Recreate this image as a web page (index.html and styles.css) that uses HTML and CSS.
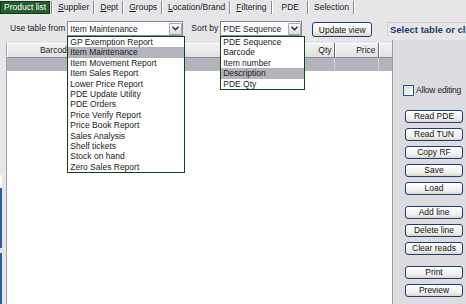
FILE: index.html
```html
<!DOCTYPE html>
<html lang="en">

<head>
    <meta charset="UTF-8">
    <meta name="viewport" content="width=device-width, initial-scale=1.0">
    <title>PDE</title>
    <link rel="stylesheet" href="styles.css">
</head>

<body>
    <div class="window">
        <!-- tabs -->
        <div class="tabs">
            <span class="tab"><span class="focus">Product list</span></span>
            <span class="tab"><u>S</u>upplier</span>
            <span class="tab"><u>D</u>ept</span>
            <span class="tab"><u>G</u>roups</span>
            <span class="tab"><u>L</u>ocation/Brand</span>
            <span class="tab"><u>F</u>iltering</span>
            <span class="tab current">PDE</span>
            <span class="tab">Selection</span>
        </div>

        <div class="page">
            <div class="toolbar">
                <label class="lbl">Use table from</label>
                <div class="combo table-combo">
                    <span class="value">Item Maintenance</span>
                    <span class="drop"><svg width="7" height="5" viewBox="0 0 7 5"><path d="M0.5 0.8 L3.5 3.8 L6.5 0.8" fill="none" stroke="#2b2b2b" stroke-width="1.4"/></svg></span>
                    <ul class="list">
                        <li>GP Exemption Report</li>
                        <li class="sel">Item Maintenance</li>
                        <li>Item Movement Report</li>
                        <li>Item Sales Report</li>
                        <li>Lower Price Report</li>
                        <li>PDE Update Utility</li>
                        <li>PDE Orders</li>
                        <li>Price Verify Report</li>
                        <li>Price Book Report</li>
                        <li>Sales Analysis</li>
                        <li>Shelf tickets</li>
                        <li>Stock on hand</li>
                        <li>Zero Sales Report</li>
                    </ul>
                </div>

                <label class="lbl sort-lbl">Sort by</label>
                <div class="combo sort-combo">
                    <span class="value">PDE Sequence</span>
                    <span class="drop"><svg width="7" height="5" viewBox="0 0 7 5"><path d="M0.5 0.8 L3.5 3.8 L6.5 0.8" fill="none" stroke="#2b2b2b" stroke-width="1.4"/></svg></span>
                    <ul class="list">
                        <li>PDE Sequence</li>
                        <li>Barcode</li>
                        <li>Item number</li>
                        <li class="sel">Description</li>
                        <li>PDE Qty</li>
                    </ul>
                </div>

                <button class="xp update">Update view</button>
            </div>

            <div class="title">Select table or click Update view</div>

            <div class="grid">
                <table>
                    <colgroup>
                        <col style="width: 98px">
                        <col style="width: 186px">
                        <col style="width: 43px">
                        <col style="width: 44px">
                        <col style="width: 14px">
                    </colgroup>
                    <thead>
                        <tr>
                            <th class="center">Barcode</th>
                            <th></th>
                            <th>Qty</th>
                            <th>Price</th>
                            <th></th>
                        </tr>
                    </thead>
                    <tbody>
                        <tr class="current-row">
                            <td></td>
                            <td></td>
                            <td></td>
                            <td></td>
                            <td></td>
                        </tr>
                    </tbody>
                </table>
            </div>

            <div class="side">
                <label class="check"><span class="box"></span>Allow editing</label>

                <div class="buttons">
                    <div class="group">
                        <button class="xp">Read PDE</button>
                        <button class="xp">Read TUN</button>
                        <button class="xp">Copy RF</button>
                        <button class="xp">Save</button>
                        <button class="xp">Load</button>
                    </div>
                    <div class="group">
                        <button class="xp">Add line</button>
                        <button class="xp">Delete line</button>
                        <button class="xp">Clear reads</button>
                    </div>
                    <div class="group last">
                        <button class="xp">Print</button>
                        <button class="xp">Preview</button>
                    </div>
                </div>
            </div>
        </div>

        <!-- edge of the window behind -->
        <div class="edge edge-white"></div>
        <div class="edge edge-blue"></div>
        <div class="edge edge-blue2"></div>
    </div>
</body>

</html>
```

FILE: styles.css
```css
/* general */
body {
    margin: 0;
    font-family: "Liberation Sans", Arial, sans-serif;
    font-size: 8.5px;
    color: #1c1c1c;
    background-color: #e6e6e9;
}

.window {
    position: relative;
    width: 466px;
    height: 304px;
    overflow: hidden;
}

/* tabs */
.tabs {
    display: flex;
    height: 16px;
    align-items: flex-start;
}

.tab {
    height: 13px;
    line-height: 12px;
    padding: 0 4px;
    margin-right: 2px;
    border-right: 1px solid #8a8a8e;
    box-shadow: 1px 0 0 #ffffff;
    white-space: nowrap;
    margin-top: 1px;
}

.tab:first-child {
    padding: 0 1px 0 0;
}

.tab.current {
    padding: 0 8px 0 8px;
}

.focus {
    display: inline-block;
    background-color: #23602a;
    color: #fff;
    padding: 0 3px;
    height: 11px;
    line-height: 11px;
    border: 1px solid #0f3a14;
    margin-top: -1px;
}

/* page layout */
.page {
    display: grid;
    grid-template-columns: 387px 5px 74px;
    grid-template-rows: 24px 1fr;
    grid-template-areas:
        "tools title title"
        "table table side";
    height: 288px;
}

/* toolbar */
.toolbar {
    grid-area: tools;
    display: flex;
    align-items: flex-start;
    padding: 5px 0 0 10px;
}

.lbl {
    line-height: 15px;
    white-space: nowrap;
}

.sort-lbl {
    margin-left: 8px;
}

.combo {
    position: relative;
    display: flex;
    align-items: center;
    height: 15px;
    box-sizing: border-box;
    background-color: #fff;
    border: 1px solid #7f8a99;
    margin-left: 2px;
}

.table-combo {
    width: 116px;
}

.sort-combo {
    width: 82px;
}

.value {
    flex: 1;
    padding-left: 2px;
    white-space: nowrap;
    overflow: hidden;
}

.drop {
    display: flex;
    align-items: center;
    justify-content: center;
    width: 13px;
    height: 12px;
    box-sizing: border-box;
    border: 1px solid #a9a9b2;
    border-radius: 1px;
    background: linear-gradient(#fbfbfb, #dcdce2);
}

/* open drop-down lists */
.list {
    position: absolute;
    left: -1px;
    top: 14px;
    margin: 0;
    padding: 0;
    list-style: none;
    background-color: #fff;
    border: 1px solid #12421a;
    z-index: 2;
}

.table-combo .list {
    width: 116px;
}

.sort-combo .list {
    width: 83px;
}

.list li {
    height: 10.4px;
    line-height: 10.4px;
    padding-left: 2px;
    white-space: nowrap;
    color: #222;
}

.list li.sel {
    background-color: #b4b4bc;
}

/* xp buttons */
.xp {
    font-family: "Liberation Sans", Arial, sans-serif;
    font-size: 8.5px;
    color: #111;
    padding: 0;
    border: 1px solid #1f3f6f;
    border-radius: 3px;
    background: linear-gradient(#ffffff, #f1f0ec 70%, #d9d5cc);
    box-sizing: border-box;
    cursor: pointer;
}

.update {
    width: 60px;
    height: 15px;
    margin-left: 10px;
    margin-top: 1px;
}

/* title */
.title {
    grid-area: title;
    margin-top: 6px;
    height: 14px;
    box-sizing: border-box;
    border-top: 1px solid #cfcfd4;
    border-left: 1px solid #cfcfd4;
    padding-left: 2px;
    font-size: 9.5px;
    font-weight: bold;
    line-height: 13px;
    color: #1e3a72;
    white-space: nowrap;
    overflow: hidden;
}

/* grid */
.grid {
    grid-area: table;
    margin: 3px 0 0 6px;
    background-color: #fff;
    border-left: 1px solid #a5a5aa;
    overflow: hidden;
}

table {
    border-collapse: collapse;
    table-layout: fixed;
    width: 385px;
}

th {
    height: 14px;
    padding: 0 2px 0 0;
    font-weight: normal;
    text-align: right;
    background: linear-gradient(#f2f2f3, #e1e1e4);
    border-right: 1px solid #6e6e72;
    border-bottom: 1px solid #8c8c90;
    box-shadow: inset 1px 1px 0 #ffffff;
    white-space: nowrap;
    overflow: hidden;
}

th.center {
    text-align: center;
    padding: 0;
}

td {
    height: 13px;
    padding: 0;
    background-color: #b3b3bb;
    border-right: 1px solid #d4d4d8;
}

/* right side */
.side {
    grid-area: side;
    min-width: 0;
    background-color: #dcdce0;
    border-left: 1px solid #9c9ca2;
    padding: 44px 0 0 10px;
}

.check {
    display: flex;
    align-items: center;
    gap: 2px;
    height: 12px;
    white-space: nowrap;
    letter-spacing: -0.2px;
}

.box {
    flex: none;
    width: 11px;
    height: 11px;
    box-sizing: border-box;
    border: 1px solid #2a5a8a;
    background: linear-gradient(135deg, #dcdcd6, #ffffff);
}

.buttons {
    margin: 14px 0 0 2px;
}

.group {
    display: flex;
    flex-direction: column;
    gap: 5px;
    margin-bottom: 11px;
}

.group .xp {
    width: 58px;
    height: 13px;
    line-height: 11px;
}

/* left edge */
.edge {
    position: absolute;
    left: 0;
    width: 2px;
}

.edge-white {
    top: 175px;
    height: 13px;
    background-color: #fbfbfb;
}

.edge-blue {
    top: 188px;
    height: 60px;
    background-color: #2d5d9e;
}

.edge-blue2 {
    top: 253px;
    height: 51px;
    background-color: #2d5d9e;
}
```
